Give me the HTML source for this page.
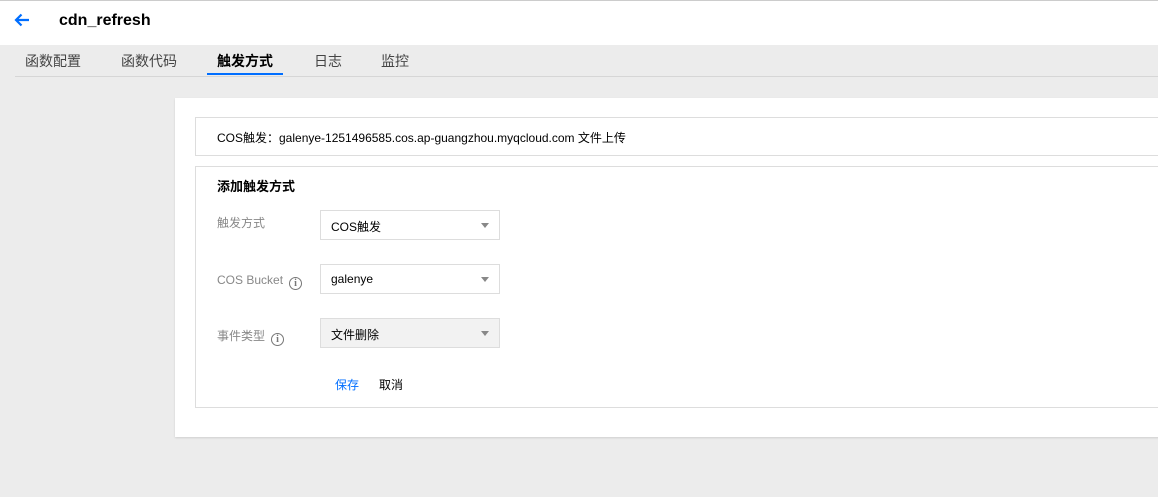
<!DOCTYPE html>
<html><head><meta charset="utf-8"><style>
body{margin:0;width:1158px;height:497px;background:#ececec;font-family:"Liberation Sans","Noto Sans CJK SC",sans-serif;overflow:hidden;position:relative;font-size:12px;color:#333}
.hdr{position:absolute;left:0;top:0;width:1158px;height:45px;background:#fff;border-top:1px solid #ccc;box-sizing:border-box}
.title{position:absolute;left:59px;top:11px;font-size:16px;font-weight:bold;color:#000}
.tabs{position:absolute;left:15px;top:45px;width:1143px;height:31px;border-bottom:1px solid #d6d6d6}
.tab{position:absolute;top:6px;font-size:14px;color:#444}
.act{font-weight:bold;color:#000}
.ul{position:absolute;left:192px;top:28px;width:76px;height:2px;background:#006eff}
.card{position:absolute;left:175px;top:98px;width:990px;height:339px;background:#fff;box-shadow:0 1px 2px rgba(0,0,0,.12)}
.box{position:absolute;left:20px;width:980px;border:1px solid #ddd;box-sizing:border-box}
.lbl{position:absolute;left:21px;color:#888}
.sel{position:absolute;left:124px;width:180px;height:30px;border:1px solid #ddd;box-sizing:border-box;padding:7px 10px;color:#000}
.sel:after{content:"";position:absolute;right:10px;top:12px;border:4px solid transparent;border-top:5px solid #888}
.i{display:inline-block;width:11px;height:11px;border:1.5px solid #777;border-radius:50%;text-align:center;font-size:10px;line-height:11px;color:#777;font-weight:bold;margin-left:6px;vertical-align:-2px;font-family:"Liberation Serif",serif}
</style></head><body>
<div class="hdr">
<svg style="position:absolute;left:13px;top:11px" width="18" height="16" viewBox="0 0 18 16"><path d="M16 8H3M8.5 2.5L3 8l5.5 5.5" fill="none" stroke="#006eff" stroke-width="2.2"/></svg>
<div class="title">cdn_refresh</div></div>
<div class="tabs">
<span class="tab" style="left:10px">函数配置</span>
<span class="tab" style="left:106px">函数代码</span>
<span class="tab act" style="left:202px">触发方式</span>
<span class="tab" style="left:299px">日志</span>
<span class="tab" style="left:366px">监控</span>
<div class="ul"></div></div>
<div class="card">
<div class="box" style="top:19px;height:39px"><span style="position:absolute;left:21px;top:11px;color:#000">COS触发：galenye-1251496585.cos.ap-guangzhou.myqcloud.com 文件上传</span></div>
<div class="box" style="top:68px;height:242px">
<div style="position:absolute;left:21px;top:9px;font-size:13px;font-weight:bold;color:#000">添加触发方式</div>
<div class="lbl" style="top:47px">触发方式</div>
<div class="sel" style="top:43px">COS触发</div>
<div class="lbl" style="top:106px">COS Bucket<span class="i">i</span></div>
<div class="sel" style="top:97px">galenye</div>
<div class="lbl" style="top:160px">事件类型<span class="i">i</span></div>
<div class="sel" style="top:151px;background:#f2f2f2">文件删除</div>
<span style="position:absolute;left:139px;top:209px;color:#006eff">保存</span>
<span style="position:absolute;left:183px;top:209px;color:#000">取消</span>
</div></div>
</body></html>
